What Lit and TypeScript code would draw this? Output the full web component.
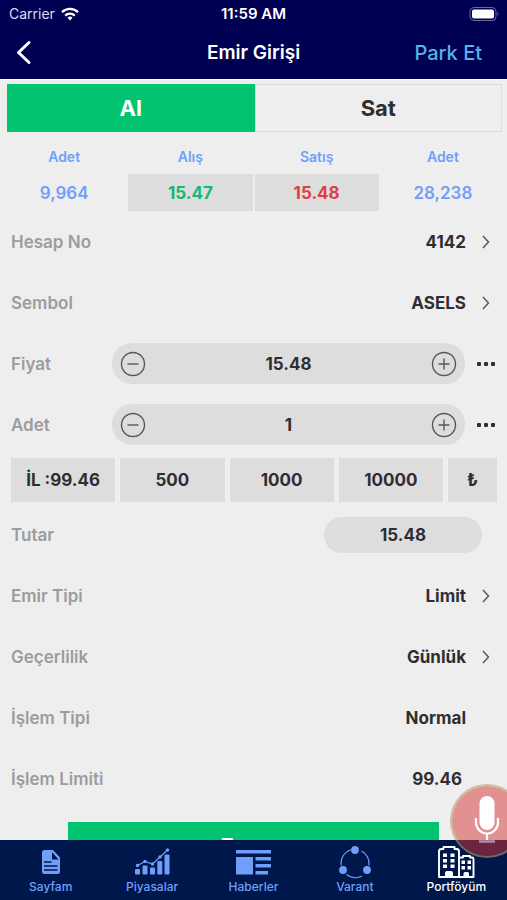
import { LitElement, html, svg, css, nothing } from "lit";
import { customElement, property, state } from "lit/decorators.js";
import { classMap } from "lit/directives/class-map.js";

const icons: Record<string, unknown> = {
  page: svg`<svg width="40" height="34" viewBox="0 0 40 34">
    <path fill="currentColor" d="M13.500 5h8.500l7 7.500v14a2.500 2.500 0 0 1-2.500 2.500h-13a2.500 2.500 0 0 1-2.500-2.500v-19a2.500 2.500 0 0 1 2.500-2.500z"/>
    <path class="fold" d="M21 7v7.500h6.500z"/>
    <path class="ink" d="M13 17h7.500M13 21h13.500M13 25h13.500" fill="none" stroke-width="1.600"/>
  </svg>`,
  chart: svg`<svg width="40" height="34" viewBox="0 0 40 34">
    <g fill="currentColor">
      <rect x="3" y="24" width="5" height="5.500" rx="1"/><rect x="10.500" y="20.500" width="5" height="9" rx="1"/>
      <rect x="18" y="22.500" width="5" height="7" rx="1"/><rect x="25.300" y="16" width="5" height="13.500" rx="1"/>
      <rect x="32.500" y="9.500" width="5" height="20" rx="1"/>
      <circle cx="5.500" cy="20.500" r="1.700"/><circle cx="13" cy="16.500" r="1.700"/><circle cx="20.500" cy="19" r="1.700"/>
      <circle cx="28" cy="12" r="1.700"/><circle cx="35.500" cy="5" r="1.700"/>
    </g>
    <path d="M5.500 20.500L13 16.500l7.500 2.500L28 12l7.500-7" fill="none" stroke="currentColor" stroke-width="1.200"/>
  </svg>`,
  news: svg`<svg width="40" height="34" viewBox="0 0 40 34">
    <path fill="currentColor" d="M3 5h35v3.500H3zM3 12h17v17.500H3zM22.500 12H38v3.500H22.500zM22.500 19H38v3.500H22.500zM22.500 26H35v3.500H22.500z"/>
  </svg>`,
  ring: svg`<svg width="40" height="34" viewBox="0 0 40 34">
    <g fill="none" stroke="currentColor" stroke-width="1.200">
      <path d="M16 4.700A14 14 0 0 0 6.300 20.500"/><path d="M26.500 6A14 14 0 0 1 33.900 20.500"/><path d="M11.500 29.500A14 14 0 0 0 27 31"/>
    </g>
    <g fill="currentColor"><circle cx="20" cy="5" r="3.900"/><circle cx="8" cy="25" r="3.900"/><circle cx="32" cy="25" r="3.900"/></g>
  </svg>`,
  towers: svg`<svg width="40" height="34" viewBox="0 0 40 34">
    <path d="M3 32V6.500q0-2.500 2.500-2.500H7.500V2h11v2h2q2.500 0 2.500 2.500v25.500zM23 32V14q0-1.500 1.500-1.500H27v-1.500h7v1.500h2q1.500 0 1.500 1.500v18z" fill="none" stroke="currentColor" stroke-width="1.900" stroke-linejoin="round"/>
    <path fill="currentColor" d="M7 8.500h4V12H7zM14.500 8.500h4V12h-4zM7 14h4v3.500H7zM14.500 14h4v3.500h-4zM7 19.500h4V23H7zM14.500 19.500h4V23h-4zM9 32v-4q0-2 2-2h4q2 0 2 2v4zM25.500 15.500H29V19h-3.500zM31.500 15.500H35V19h-3.500zM25.500 21H29v3.500h-3.500zM31.500 21H35v3.500h-3.500zM27.500 32v-3.500q0-1.500 1.500-1.500h2.500Q33 27 33 28.500V32z"/>
  </svg>`,
};

interface FormRow {
  id: string;
  label: string;
  value: string;
  kind: "link" | "stepper" | "pill" | "plain" | "limit";
}

@customElement("order-row")
export class OrderRow extends LitElement {
  @property({ attribute: false }) row!: FormRow;

  static styles = css`
    :host { display: block; }
    .row { display: flex; align-items: center; height: 61px; padding: 0 11px; }
    .label { flex: none; width: 101px; color: #9c9c9e; font-size: 17px; line-height: 24px; font-weight: 600; white-space: nowrap; }
    button { border: 0; margin: 0; padding: 0; background: none; color: inherit; font: inherit; display: flex; align-items: center; justify-content: center; }
    svg { display: block; }
    .value { font-size: 17px; line-height: 24px; font-weight: 700; margin-left: auto; }
    .link { gap: 12px; }
    .plain { margin-right: 30px; }
    .limit { margin-right: 34px; }
    .stepper { flex: 1; min-width: 0; display: flex; align-items: center; height: 41px; padding: 0 8px; box-sizing: border-box; background: #ddd; border-radius: 20px; margin-right: 11px; }
    .stepper button { flex: none; width: 26px; height: 26px; color: #58585a; }
    input { flex: 1; min-width: 0; border: 0; padding: 0; background: none; color: inherit; text-align: center; font: 700 17px/24px Inter, "Noto Sans", sans-serif; }
    .pill { flex: none; width: 158px; height: 36px; line-height: 36px; border-radius: 18px; background: #ddd; text-align: center; margin-right: 14px; }
    .more { flex: none; width: 20px; height: 30px; }
  `;

  private control() {
    const { id, label, value, kind } = this.row;
    if (kind === "stepper") {
      return html`<div class="stepper">
          <button aria-label="${label} azalt"><svg width="26" height="26" viewBox="0 0 26 26" fill="none" stroke="currentColor" stroke-width="1.400"><circle cx="13" cy="13" r="11.500"/><path d="M7.500 13h11"/></svg></button>
          <input id=${id} type="text" inputmode="decimal" .value=${value} />
          <button aria-label="${label} artır"><svg width="26" height="26" viewBox="0 0 26 26" fill="none" stroke="currentColor" stroke-width="1.400"><circle cx="13" cy="13" r="11.500"/><path d="M7.500 13h11M13 7.500v11"/></svg></button>
        </div>
        <button class="more" aria-label="${label} seçenekleri"><svg width="20" height="4" viewBox="0 0 20 4" fill="currentColor"><rect x="1" width="4" height="4" rx="1"/><rect x="8" width="4" height="4" rx="1"/><rect x="15" width="4" height="4" rx="1"/></svg></button>`;
    }
    if (kind === "link") {
      return html`<button class="value link" id=${id}>${value}<svg width="18" height="16" viewBox="0 0 18 16" fill="none" stroke="#58585a" stroke-width="1.500"><path d="M5 2l5.500 6L5 14"/></svg></button>`;
    }
    return html`<output class="value ${kind}" id=${id}>${value}</output>`;
  }

  render() {
    return html`<div class="row"><label class="label" for=${this.row.id}>${this.row.label}</label>${this.control()}</div>`;
  }
}

@customElement("app-root")
export class AppRoot extends LitElement {
  @state() private side = "Al";

  private upper: FormRow[] = [
    { id: "account", label: "Hesap No", value: "4142", kind: "link" },
    { id: "symbol", label: "Sembol", value: "ASELS", kind: "link" },
    { id: "price", label: "Fiyat", value: "15.48", kind: "stepper" },
    { id: "quantity", label: "Adet", value: "1", kind: "stepper" },
  ];
  private lower: FormRow[] = [
    { id: "total", label: "Tutar", value: "15.48", kind: "pill" },
    { id: "order-type", label: "Emir Tipi", value: "Limit", kind: "link" },
    { id: "validity", label: "Geçerlilik", value: "Günlük", kind: "link" },
    { id: "trade-type", label: "İşlem Tipi", value: "Normal", kind: "plain" },
    { id: "trade-limit", label: "İşlem Limiti", value: "99.46", kind: "limit" },
  ];
  private quick = ["İL :99.46", "500", "1000", "10000", "₺"];
  private tabs = [
    ["page", "Sayfam"],
    ["chart", "Piyasalar"],
    ["news", "Haberler"],
    ["ring", "Varant"],
    ["towers", "Portföyüm"],
  ];

  static styles = css`
    :host { display: flex; flex-direction: column; position: relative; height: 100vh; overflow: hidden; background: #eee; color: #2e2e32; font-family: Inter, "Noto Sans", sans-serif; }
    button { border: 0; margin: 0; padding: 0; background: none; color: inherit; font: inherit; }
    svg { display: block; }
    header { flex: none; background: #000053; color: #fff; border-bottom: 1px solid #fff; }
    .status, .nav { display: grid; grid-template-columns: 1fr auto 1fr; align-items: center; }
    .status { height: 27px; padding: 0 7px; font-size: 14px; line-height: 20px; }
    .carrier { display: flex; align-items: center; gap: 6px; padding-left: 2px; color: #dcdcec; }
    .clock { font-size: 15px; font-weight: 600; }
    .battery { justify-self: end; }
    .nav { height: 52px; padding: 0 25px 0 12px; }
    .back { justify-self: start; }
    h1 { margin: 0; font-size: 19px; line-height: 26px; font-weight: 600; padding-left: 13px; }
    .park { justify-self: end; color: #53b4e8; font-size: 20px; line-height: 26px; font-weight: 500; }
    main { flex: 1; min-height: 0; overflow-y: auto; scrollbar-width: none; }
    .sides { display: grid; grid-template-columns: 1fr 1fr; margin: 4px 5px 0 7px; height: 48px; }
    .side { border: 1px solid #dcdcdc; font-size: 22px; line-height: 28px; font-weight: 700; }
    .side.on { border-color: #02c370; background: #02c370; color: #fff; }
    table { width: 100%; table-layout: fixed; border-spacing: 2px 0; margin-top: 7px; text-align: center; color: #6f9ffb; }
    th, td { padding: 0; }
    th { height: 35px; font-size: 14px; line-height: 20px; font-weight: 600; }
    td { height: 37px; font-size: 17px; line-height: 24px; font-weight: 600; }
    .bid, .ask { background: #ddd; font-weight: 700; }
    .bid { color: #14b873; }
    .ask { color: #dc4040; }
    .quick { display: grid; grid-template-columns: repeat(4, 1fr) 49px; gap: 5px; margin: 3px 10px 2px 11px; }
    .quick button { height: 44px; background: #ddd; font-size: 17px; line-height: 24px; font-weight: 700; }
    .submit { display: block; width: 73%; height: 46px; margin: 13px auto; background: #02c370; color: #fff; font-size: 18px; line-height: 24px; font-weight: 700; }
    .tabs { flex: none; display: grid; grid-template-columns: repeat(5, 1fr); height: 60px; background: #00174b; color: #6f9ffb; }
    .tab { display: flex; flex-direction: column; align-items: center; padding-top: 5px; text-decoration: none; color: inherit; font-size: 12px; line-height: 16px; font-weight: 500; }
    .tab.on { color: #fff; }
    .tab .ink { stroke: #00174b; }
    .tab .fold { fill: #00174b; }
    .mic { position: absolute; right: -17px; bottom: 42px; width: 74px; height: 74px; box-sizing: border-box; border: 2px solid rgba(176, 160, 110, 0.6); border-radius: 50%; background: rgba(213, 51, 51, 0.5); background-clip: padding-box; display: flex; align-items: center; justify-content: center; }
  `;

  render() {
    return html`
      <header>
        <div class="status">
          <span class="carrier">Carrier
            <svg width="18" height="14" viewBox="0 0 18 14" fill="none" stroke="#fff" stroke-width="2.300"><path d="M1 5.200a11.500 11.500 0 0 1 16 0M4.200 8.600a7 7 0 0 1 9.600 0"/><path d="M9 13.500l-2.500-2.700a3.600 3.600 0 0 1 5 0z" fill="#fff" stroke="none"/></svg>
          </span>
          <span class="clock">11:59 AM</span>
          <svg class="battery" width="31" height="14" viewBox="0 0 31 14"><rect x="1" y=".5" width="26" height="13" rx="4" fill="none" stroke="#6b6ba0"/><rect x="3" y="2.500" width="22" height="9" rx="2" fill="#fff"/><path d="M28.500 5q2 2 0 4z" fill="#6b6ba0"/></svg>
        </div>
        <div class="nav">
          <button class="back" aria-label="Geri"><svg width="24" height="26" viewBox="0 0 24 26" fill="none" stroke="#fff" stroke-width="3" stroke-linecap="round" stroke-linejoin="round"><path d="M17 2.500L6.500 12.500 17 22.500"/></svg></button>
          <h1>Emir Girişi</h1>
          <button class="park">Park Et</button>
        </div>
      </header>
      <main>
        <div class="sides">
          ${["Al", "Sat"].map((s) => html`<button class=${classMap({ side: true, on: s === this.side })} aria-pressed=${s === this.side} @click=${() => (this.side = s)}>${s}</button>`)}
        </div>
        <table>
          <thead><tr><th>Adet</th><th>Alış</th><th>Satış</th><th>Adet</th></tr></thead>
          <tbody><tr><td>9,964</td><td class="bid">15.47</td><td class="ask">15.48</td><td>28,238</td></tr></tbody>
        </table>
        ${this.upper.map((row) => html`<order-row .row=${row}></order-row>`)}
        <div class="quick">${this.quick.map((q) => html`<button>${q}</button>`)}</div>
        ${this.lower.map((row) => html`<order-row .row=${row}></order-row>`)}
        <button class="submit">Tamam</button>
      </main>
      <nav class="tabs">
        ${this.tabs.map(([icon, name]) => html`<a href="#${icon}" class=${classMap({ tab: true, on: icon === "towers" })} aria-current=${icon === "towers" ? "page" : nothing}>${icons[icon]}<span>${name}</span></a>`)}
      </nav>
      <button class="mic" aria-label="Sesli komut">
        <svg width="30" height="52" viewBox="0 0 30 52"><rect x="7.500" y="1" width="15" height="34" rx="7.500" fill="#fff"/><path d="M4 23v4.500a11 11 0 0 0 22 0V23M15 38.500V45" fill="none" stroke="#fff" stroke-width="2.200"/><path d="M7 46.500h16" stroke="#a993a8" stroke-width="2.500"/></svg>
      </button>
    `;
  }
}
